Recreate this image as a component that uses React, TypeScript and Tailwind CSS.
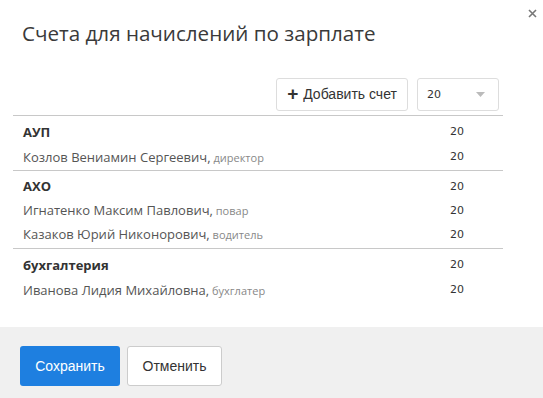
import React from "react";

const groups = [
  { name: "АУП", people: [{ n: "Козлов Вениамин Сергеевич", p: "директор" }] },
  {
    name: "АХО",
    people: [
      { n: "Игнатенко Максим Павлович", p: "повар" },
      { n: "Казаков Юрий Никонорович", p: "водитель" },
    ],
  },
  { name: "бухгалтерия", people: [{ n: "Иванова Лидия Михайловна", p: "бухглатер" }] },
];

const sans = { fontFamily: '"Open Sans", sans-serif' };
const num = { fontFamily: '"DejaVu Sans", Verdana, sans-serif' };

export default function App() {
  return (
    <div className="relative w-[543px] h-[398px] bg-white flex flex-col overflow-hidden" style={sans}>
      <button className="absolute right-[3px] top-[3px] w-[16px] h-[20px] flex items-center justify-center">
        <svg width="9" height="9" viewBox="0 0 9 9"><path d="M1 1L8 8M8 1L1 8" stroke="#777" strokeWidth="1.6" /></svg>
      </button>
      <div className="pl-[22px] pt-[20px] text-[20.6px] leading-[26px] text-[#3a3a3a]">Счета для начислений по зарплате</div>
      <div className="flex justify-end pr-[44px] mt-[32px] gap-[9px]">
        <button className="h-[33px] w-[132px] border border-[#ddd] rounded-[3px] bg-white flex items-center justify-center text-[14px] text-[#333] gap-[5px]" style={{ fontFamily: '"Liberation Sans", Arial, sans-serif' }}>
          <span className="text-[19px] font-bold leading-none -mt-[2px]">+</span>
          <span>Добавить счет</span>
        </button>
        <div className="h-[33px] w-[82px] border border-[#ddd] rounded-[3px] bg-white flex items-center pl-[9px] pr-[13px] justify-between">
          <span className="text-[11px] text-[#333] mt-[2px]" style={num}>20</span>
          <svg width="9" height="5" viewBox="0 0 9 5"><path d="M0 0H9L4.5 5Z" fill="#bbb" /></svg>
        </div>
      </div>
      <div className="ml-[13px] w-[490px] mt-[4px]">
        {groups.map((g, gi) => (
          <div key={gi} className={`border-t border-[#c8c8c8] pt-[4px] ${gi === 1 ? "pb-[1px]" : "pb-0"}`}>
            <div className={`flex items-center ${gi === 1 ? "h-[24px]" : "h-[25px]"}`}>
              <div className="flex-1 pl-[10px] text-[13px] font-bold text-[#333]">{g.name}</div>
              <div className="w-[53px] text-[11px] text-[#333]" style={num}>20</div>
            </div>
            {g.people.map((p, pi) => (
              <div key={pi} className={`flex items-center ${gi === 1 ? "h-[24px]" : "h-[25px]"}`}>
                <div className="flex-1 pl-[10px] text-[13px] text-[#555]">
                  {p.n},<span className="text-[11px] text-[#888]"> {p.p}</span>
                </div>
                <div className="w-[53px] text-[11px] text-[#333]" style={num}>20</div>
              </div>
            ))}
          </div>
        ))}
      </div>
      <div className="flex-1" />
      <div className="h-[71px] bg-[#f0f0f0] px-[20px] pt-[19px] flex gap-[7px]" style={{ fontFamily: '"Liberation Sans", Arial, sans-serif' }}>
        <button className="h-[40px] w-[100px] rounded-[3px] bg-[#1e7fe0] text-white text-[14px]">Сохранить</button>
        <button className="h-[40px] w-[95px] rounded-[3px] bg-white border border-[#ccc] text-[#333] text-[14px]">Отменить</button>
      </div>
    </div>
  );
}
